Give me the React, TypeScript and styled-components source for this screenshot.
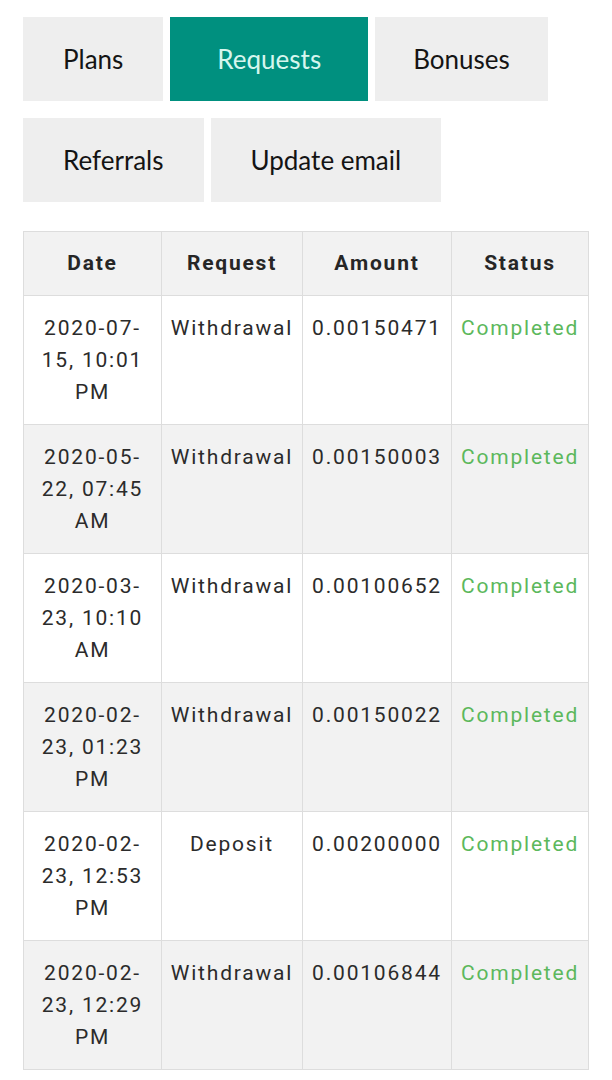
import React from "react"
import styled, { createGlobalStyle } from "styled-components"

const GlobalStyle = createGlobalStyle`
  html, body {
    margin: 0;
    padding: 0;
    background: #ffffff;
  }
`

const Page = styled.div`
  padding: 17px 24px 12px 23px;
  width: 612px;
  box-sizing: border-box;
`

const Tabs = styled.div`
  display: flex;
  flex-direction: column;
  gap: 17px;
  margin-bottom: 29px;
`

const TabRow = styled.div`
  display: flex;
  gap: 7px;
`

const Tab = styled.button<{ active?: boolean; pad?: number }>`
  height: 84px;
  padding: 0 ${({ pad }) => pad || 40}px;
  border: none;
  background: ${({ active }) => (active ? "#00907f" : "#eeeeee")};
  color: ${({ active }) => (active ? "#d6f6ee" : "#141414")};
  font-family: Lato, "Liberation Sans", sans-serif;
  font-size: 26px;
  cursor: pointer;
`

const Table = styled.table`
  width: 565px;
  table-layout: fixed;
  border-collapse: collapse;
  font-family: Roboto, "Liberation Sans", sans-serif;
  color: #2b2b2b;
`

const Th = styled.th`
  background: #f2f2f2;
  border: 1px solid #dddddd;
  padding: 15px 4px 16px;
  font-size: 21px;
  line-height: 32px;
  letter-spacing: 1.8px;
  font-weight: 700;
  text-align: center;
  color: #262626;
`

const Row = styled.tr<{ shade?: boolean }>`
  background: ${({ shade }) => (shade ? "#f2f2f2" : "#ffffff")};
`

const Td = styled.td<{ green?: boolean }>`
  border: 1px solid #dddddd;
  padding: 16px 4px;
  height: 96px;
  vertical-align: top;
  text-align: center;
  font-size: 21px;
  line-height: 32px;
  letter-spacing: 1.8px;
  color: ${({ green }) => (green ? "#5cb85c" : "#2b2b2b")};
`

const rows = [
  ["2020-07-15, 10:01 PM", "Withdrawal", "0.00150471"],
  ["2020-05-22, 07:45 AM", "Withdrawal", "0.00150003"],
  ["2020-03-23, 10:10 AM", "Withdrawal", "0.00100652"],
  ["2020-02-23, 01:23 PM", "Withdrawal", "0.00150022"],
  ["2020-02-23, 12:53 PM", "Deposit", "0.00200000"],
  ["2020-02-23, 12:29 PM", "Withdrawal", "0.00106844"],
]

export default function App() {
  return (
    <Page>
      <GlobalStyle />
      <Tabs>
        <TabRow>
          <Tab>Plans</Tab>
          <Tab active pad={47}>Requests</Tab>
          <Tab pad={38}>Bonuses</Tab>
        </TabRow>
        <TabRow>
          <Tab>Referrals</Tab>
          <Tab>Update email</Tab>
        </TabRow>
      </Tabs>
      <Table>
        <colgroup>
          <col style={{ width: 138 }} />
          <col style={{ width: 141 }} />
          <col style={{ width: 149 }} />
          <col style={{ width: 137 }} />
        </colgroup>
        <thead>
          <tr>
            <Th>Date</Th>
            <Th>Request</Th>
            <Th>Amount</Th>
            <Th>Status</Th>
          </tr>
        </thead>
        <tbody>
          {rows.map((r, i) => (
            <Row key={i} shade={i % 2 === 1}>
              <Td>{r[0]}</Td>
              <Td>{r[1]}</Td>
              <Td>{r[2]}</Td>
              <Td green>Completed</Td>
            </Row>
          ))}
        </tbody>
      </Table>
    </Page>
  )
}
